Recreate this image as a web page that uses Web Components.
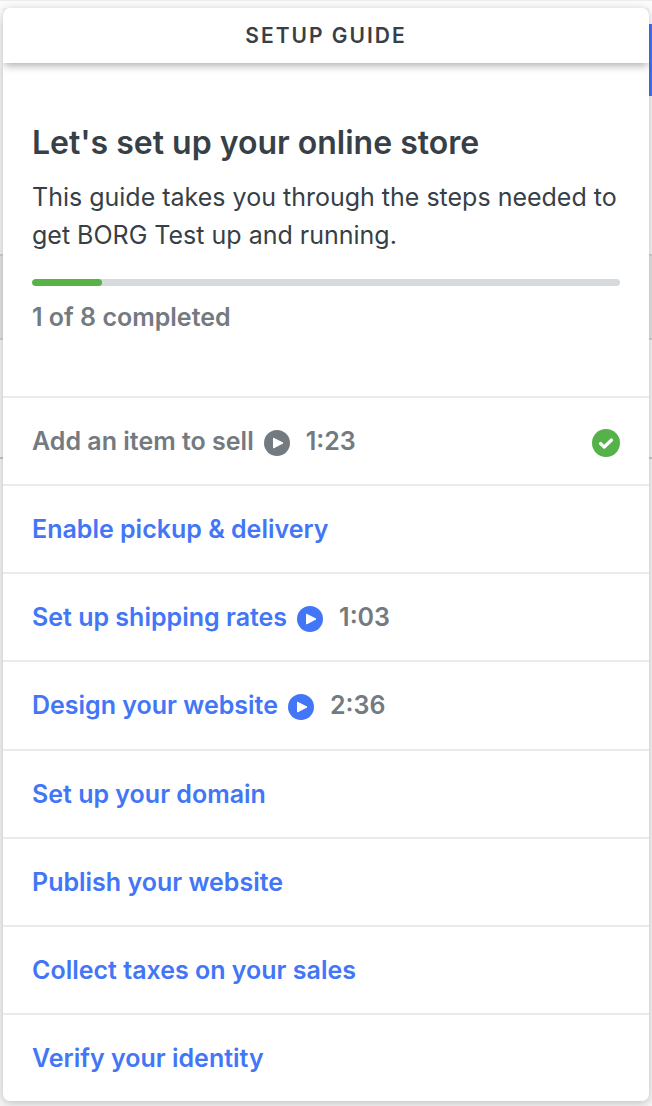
<!DOCTYPE html>
<html lang="en">
<head>
<meta charset="utf-8">
<meta name="viewport" content="width=device-width, initial-scale=1">
<title>Setup guide</title>
<style>
  body { margin: 0; background: #f7f7f7; color: #373f47; font-family: Inter, "Liberation Sans", sans-serif; }
</style>
</head>
<body>
<setup-guide heading="Setup guide">
  <guide-intro heading="Let's set up your online store" done="1" total="8">This guide takes you through the steps needed to get BORG Test up and running.</guide-intro>
  <guide-step slot="steps" time="1:23" done>Add an item to sell</guide-step>
  <guide-step slot="steps">Enable pickup &amp; delivery</guide-step>
  <guide-step slot="steps" time="1:03">Set up shipping rates</guide-step>
  <guide-step slot="steps" time="2:36">Design your website</guide-step>
  <guide-step slot="steps">Set up your domain</guide-step>
  <guide-step slot="steps">Publish your website</guide-step>
  <guide-step slot="steps">Collect taxes on your sales</guide-step>
  <guide-step slot="steps">Verify your identity</guide-step>
</setup-guide>

<script>
class PageBackdrop extends HTMLElement {
  constructor() {
    super();
    this.attachShadow({ mode: 'open' }).innerHTML = `
      <style>
        :host { position: absolute; inset: 0; display: grid; overflow: hidden;
          grid-template-rows: 24px 72px 158px 86px 119px 1fr; grid-template-columns: 1fr 8px; }
        div { grid-column: 1 / -1; box-sizing: border-box; background: #f7f7f7; }
        .top { border-top: 1px solid #ececec; background: #fcfcfc; }
        .action { grid-column: 2; background: #4374fa; }
        .band { background: #e4e6e7; border-block: 2px solid #d0d2d4; }
        .line { border-bottom: 2px solid #c6c8ca; }
      </style>
      <div class="top"></div><div class="action"></div><div></div>
      <div class="band"></div><div class="line"></div><div></div>`;
  }
}

class SetupGuide extends HTMLElement {
  constructor() {
    super();
    this.attachShadow({ mode: 'open' }).innerHTML = `
      <style>
        :host { position: relative; box-sizing: border-box; display: flex; min-height: 100vh; padding: 8px 3px 5px; }
        .card { position: relative; flex: 1; min-width: 0; display: flex; flex-direction: column;
          background: #fff; border-radius: 7px; box-shadow: 0 2px 10px rgba(0,0,0,.24); }
        header { position: relative; background: #fff; border-radius: 7px 7px 0 0;
          box-shadow: 0 3px 10px -1px rgba(0,0,0,.36); clip-path: inset(0 0 -16px 0); }
        h1 { margin: 0; font-size: 21px; line-height: 55px; font-weight: 600; letter-spacing: 2px;
          text-align: center; text-transform: uppercase; }
        .steps { flex: 1; display: flex; flex-direction: column; }
      </style>
      <page-backdrop></page-backdrop>
      <main class="card">
        <header><h1></h1></header>
        <slot></slot>
        <div class="steps" role="list"><slot name="steps"></slot></div>
      </main>`;
  }
  connectedCallback() {
    this.shadowRoot.querySelector('h1').textContent = this.getAttribute('heading');
  }
}

class GuideIntro extends HTMLElement {
  constructor() {
    super();
    this.attachShadow({ mode: 'open' }).innerHTML = `
      <style>
        :host { display: block; padding: 60px 29px; }
        h2 { margin: 0 0 15px; font-size: 32px; line-height: 40px; font-weight: 600; }
        p { margin: 0; font-size: 25px; line-height: 38px; }
        .track { height: 7px; margin: 25px 0 12px; border-radius: 4px; background: #d6dadd; overflow: hidden; }
        .fill { height: 100%; border-radius: 4px; background: #57b346; }
        .count { color: #737a80; font-size: 25px; line-height: 38px; font-weight: 600; }
      </style>
      <h2></h2>
      <p><slot></slot></p>
      <div class="track" role="progressbar" aria-label="Setup progress" aria-valuemin="0"><div class="fill"></div></div>
      <div class="count"></div>`;
  }
  connectedCallback() {
    const root = this.shadowRoot;
    const done = this.getAttribute('done'), total = this.getAttribute('total');
    root.querySelector('h2').textContent = this.getAttribute('heading');
    root.querySelector('.count').textContent = done + ' of ' + total + ' completed';
    root.querySelector('.fill').style.width = (done / total * 95) + '%';
    root.querySelector('.track').setAttribute('aria-valuenow', done);
    root.querySelector('.track').setAttribute('aria-valuemax', total);
  }
}

class GuideStep extends HTMLElement {
  constructor() {
    super();
    this.attachShadow({ mode: 'open' }).innerHTML = `
      <style>
        :host { flex: 1; display: flex; align-items: center; box-sizing: border-box; min-height: 80px;
          padding: 0 29px; border-top: 2px solid #ebebeb; color: #4276f7;
          font-size: 25px; line-height: 38px; font-weight: 600; }
        :host([done]) { color: #737a80; }
        a { color: inherit; text-decoration: none; }
        button { all: unset; display: flex; margin: 4px 16px 0 10px; cursor: pointer; }
        svg { display: block; }
        .time { color: #737a80; }
        .check { margin: 4px 0 0 auto; }
      </style>
      <a href="#"><slot></slot></a>`;
  }
  connectedCallback() {
    this.setAttribute('role', 'listitem');
    let extra = '';
    if (this.hasAttribute('time')) {
      extra += `<button type="button" aria-label="Play video">
        <svg width="26" height="26" viewBox="0 0 26 26"><circle cx="13" cy="13" r="13" fill="currentColor"/>
        <path d="M9.5 8.2 19 13 9.5 18Z" fill="#fff" stroke="#fff" stroke-linejoin="round"/></svg>
      </button><span class="time">${this.getAttribute('time')}</span>`;
    }
    if (this.hasAttribute('done')) {
      extra += `<svg class="check" width="28" height="28" viewBox="0 0 28 28" role="img" aria-label="Completed">
        <circle cx="14" cy="14" r="14" fill="#55b249"/>
        <path d="M8.5 14.5 12.3 18 19.5 11" fill="none" stroke="#fff" stroke-width="3.2" stroke-linecap="round" stroke-linejoin="round"/></svg>`;
    }
    this.shadowRoot.querySelector('a').insertAdjacentHTML('afterend', extra);
  }
}

customElements.define('page-backdrop', PageBackdrop);
customElements.define('guide-intro', GuideIntro);
customElements.define('guide-step', GuideStep);
customElements.define('setup-guide', SetupGuide);
</script>
</body>
</html>
